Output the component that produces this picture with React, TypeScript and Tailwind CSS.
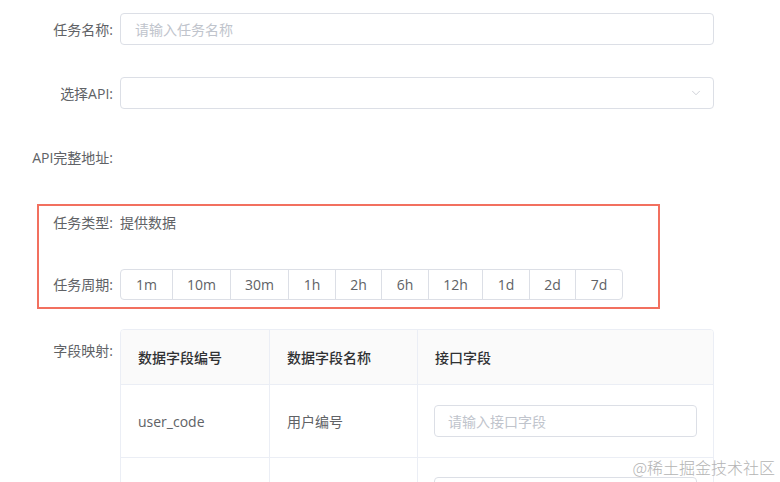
import { ChevronDown } from 'lucide-react';

const periods: { label: string; w: number }[] = [
  { label: '1m', w: 51 },
  { label: '10m', w: 58 },
  { label: '30m', w: 58 },
  { label: '1h', w: 47 },
  { label: '2h', w: 46 },
  { label: '6h', w: 47 },
  { label: '12h', w: 54 },
  { label: '1d', w: 47 },
  { label: '2d', w: 46 },
  { label: '7d', w: 47 },
];

const font = { fontFamily: '"Open Sans", "Noto Sans CJK SC", sans-serif' };

function Label({ children, w = 120 }: { children: React.ReactNode; w?: number }) {
  return (
    <div className="shrink-0 pr-[7px] text-right text-[14px] text-[#606266]" style={{ width: w }}>
      {children}
    </div>
  );
}

export default function App() {
  return (
    <div className="relative h-[482px] w-[780px] overflow-hidden bg-white pt-[13px]" style={font}>
      {/* 任务名称 */}
      <div className="flex h-[32px] items-center">
        <Label>任务名称:</Label>
        <div className="flex h-[32px] w-[594px] items-center rounded-[4px] border border-[#dcdfe6] px-[14px] text-[14px] text-[#c0c4cc]">
          请输入任务名称
        </div>
      </div>

      {/* 选择API */}
      <div className="mt-[32px] flex h-[32px] items-center">
        <Label>选择API:</Label>
        <div className="flex h-[32px] w-[594px] items-center justify-end rounded-[4px] border border-[#dcdfe6] pr-[10px]">
          <ChevronDown size={14} strokeWidth={1.3} className="text-[#c0c4cc]" />
        </div>
      </div>

      {/* API完整地址 */}
      <div className="mt-[32px] flex h-[32px] items-center">
        <Label>API完整地址:</Label>
      </div>

      {/* 高亮区域 */}
      <div className="ml-[37px] mt-[31px] h-[105px] w-[623px] border-2 border-[#f2705f] pt-[6px]">
        <div className="flex h-[20px] items-center">
          <Label w={81}>任务类型:</Label>
          <span className="text-[14px] text-[#606266]">提供数据</span>
        </div>
        <div className="mt-[37px] flex h-[31px] items-center">
          <Label w={81}>任务周期:</Label>
          <div className="flex h-[31px] overflow-hidden rounded-[4px] border border-[#dcdfe6]">
            {periods.map((p, i) => (
              <div
                key={p.label}
                className={[
                  'flex items-center justify-center text-[14px] text-[#606266]',
                  i > 0 ? 'border-l border-[#dcdfe6]' : '',
                ].join(' ')}
                style={{ width: p.w }}
              >
                {p.label}
              </div>
            ))}
          </div>
        </div>
      </div>

      {/* 字段映射 */}
      <div className="mt-[20px] flex items-start">
        <div className="pt-[11px]">
          <Label>字段映射:</Label>
        </div>
        <div className="w-[594px] overflow-hidden rounded-t-[4px] border border-[#ebeef5]">
          <div className="flex h-[54px] bg-[#fafafa] text-[14px] font-medium text-[#303133]">
            <div className="flex w-[149px] items-center border-r border-[#ebeef5] pl-[17px]">数据字段编号</div>
            <div className="flex w-[148px] items-center border-r border-[#ebeef5] pl-[17px]">数据字段名称</div>
            <div className="flex flex-1 items-center pl-[17px]">接口字段</div>
          </div>
          <div className="flex h-[73px] border-t border-[#ebeef5] text-[14px] text-[#606266]">
            <div className="flex w-[149px] items-center border-r border-[#ebeef5] pl-[17px]">user_code</div>
            <div className="flex w-[148px] items-center border-r border-[#ebeef5] pl-[17px]">用户编号</div>
            <div className="flex flex-1 items-center pl-[16px]">
              <div className="flex h-[32px] w-[263px] items-center rounded-[4px] border border-[#dcdfe6] px-[13px] text-[#c0c4cc]">
                请输入接口字段
              </div>
            </div>
          </div>
          <div className="flex h-[73px] border-t border-[#ebeef5]">
            <div className="w-[149px] border-r border-[#ebeef5]" />
            <div className="w-[148px] border-r border-[#ebeef5]" />
            <div className="flex-1 pl-[16px] pt-[19px]">
              <div className="h-[32px] w-[263px] rounded-[4px] border border-[#dcdfe6]" />
            </div>
          </div>
        </div>
      </div>

      {/* 水印 */}
      <div
        className="absolute bottom-[5px] right-[5px] text-[16px] leading-[20px] text-[#b4b4b4]"
        style={{ fontFamily: '"Noto Sans CJK SC", sans-serif', fontWeight: 300 }}
      >
        @稀土掘金技术社区
      </div>
    </div>
  );
}
